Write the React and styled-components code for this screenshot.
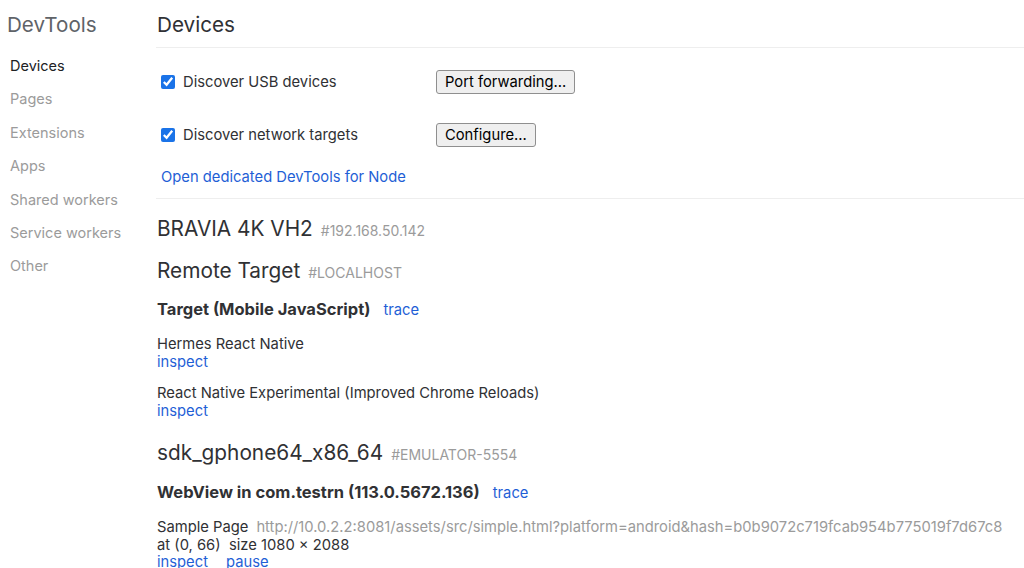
import React from "react";
import styled, { createGlobalStyle } from "styled-components";

const Global = createGlobalStyle`
  html, body { margin: 0; padding: 0; background: #fff; }
  body { font-family: Inter, "Noto Sans", "Liberation Sans", sans-serif; color: #202124; overflow: hidden; }
  * { box-sizing: border-box; }
`;

const Page = styled.div`
  display: flex;
  width: 1024px;
  height: 568px;
  overflow: hidden;
`;

const Sidebar = styled.nav`
  width: 156px;
  flex: none;
  padding: 12px 0 0 7px;
`;

const Brand = styled.div`
  font-size: 20.6px;
  color: #5f6368;
  line-height: 26px;
  margin-bottom: 19px;
`;

const NavItem = styled.div`
  font-size: 14.5px;
  line-height: 17px;
  height: 33.4px;
  padding-left: 3px;
  color: ${(p) => (p.$active ? "#202124" : "#9b9b9b")};
`;

const Main = styled.main`
  flex: 1;
  min-width: 0;
`;

const Header = styled.div`
  height: 48px;
  border-bottom: 1px solid #eeeeee;
  padding: 12px 0 0 1px;
  font-size: 20.7px;
  line-height: 26px;
  color: #303134;
`;

const Settings = styled.div`
  padding: 22px 0 0 5px;
  height: 151px;
  border-bottom: 1px solid #eeeeee;
`;

const OptionRow = styled.div`
  display: flex;
  align-items: center;
  height: 24px;
  margin-bottom: 29px;
`;

const Check = styled.input.attrs({ type: "checkbox", defaultChecked: true })`
  width: 14px;
  height: 14px;
  margin: 0 8px 0 0;
  accent-color: #1a73e8;
  flex: none;
`;

const OptionLabel = styled.label`
  width: 253px;
  font-size: 14.75px;
  color: #303134;
`;

const Button = styled.button`
  height: 24px;
  padding: 0 8px;
  font-family: inherit;
  font-size: 14.75px;
  color: #000;
  background: #efefef;
  border: 1px solid #8f8f8f;
  border-radius: 3px;
`;

const Link = styled.span`
  color: #1f5fd6;
  font-size: 14.75px;
  margin-right: ${(p) => p.$gap || 0}px;
`;

const NodeLink = styled(Link)`
  display: block;
  line-height: 17px;
  margin-top: -7px;
`;

const Devices = styled.div`
  padding: 18px 0 0 1px;
`;

const DeviceTitle = styled.div`
  display: flex;
  align-items: baseline;
  gap: 8px;
  font-size: 20.8px;
  line-height: 24px;
  color: #303134;
  margin-bottom: ${(p) => p.$mb}px;
`;

const Serial = styled.span`
  font-size: 14px;
  color: #9b9b9b;
`;

const BrowserTitle = styled.div`
  display: flex;
  align-items: baseline;
  gap: 13px;
  font-size: 16.5px;
  font-weight: 700;
  line-height: 18px;
  color: #303134;
  margin-bottom: 17px;
`;

const TraceLink = styled(Link)`
  font-weight: 400;
`;

const Target = styled.div`
  font-size: 14.75px;
  line-height: 17.5px;
  color: #303134;
  margin-bottom: ${(p) => p.$mb || 14}px;
  white-space: nowrap;
`;

const Url = styled.span`
  color: #9b9b9b;
  margin-left: 8px;
`;

const Line = styled.div``;

const navItems = ["Devices", "Pages", "Extensions", "Apps", "Shared workers", "Service workers", "Other"];

export default function App() {
  return (
    <>
      <Global />
      <Page>
        <Sidebar>
          <Brand>DevTools</Brand>
          {navItems.map((n, i) => (
            <NavItem key={n} $active={i === 0}>{n}</NavItem>
          ))}
        </Sidebar>
        <Main>
          <Header>Devices</Header>
          <Settings>
            <OptionRow>
              <Check />
              <OptionLabel>Discover USB devices</OptionLabel>
              <Button>Port forwarding...</Button>
            </OptionRow>
            <OptionRow>
              <Check />
              <OptionLabel>Discover network targets</OptionLabel>
              <Button>Configure...</Button>
            </OptionRow>
            <NodeLink>Open dedicated DevTools for Node</NodeLink>
          </Settings>
          <Devices>
            <DeviceTitle $mb={16}>BRAVIA 4K VH2 <Serial>#192.168.50.142</Serial></DeviceTitle>
            <DeviceTitle $mb={15}>Remote Target <Serial>#LOCALHOST</Serial></DeviceTitle>
            <BrowserTitle>Target (Mobile JavaScript) <TraceLink>trace</TraceLink></BrowserTitle>
            <Target>
              <Line>Hermes React Native</Line>
              <Line><Link>inspect</Link></Line>
            </Target>
            <Target $mb={21}>
              <Line>React Native Experimental (Improved Chrome Reloads)</Line>
              <Line><Link>inspect</Link></Line>
            </Target>
            <DeviceTitle $mb={16}>sdk_gphone64_x86_64 <Serial>#EMULATOR-5554</Serial></DeviceTitle>
            <BrowserTitle>WebView in com.testrn (113.0.5672.136) <TraceLink>trace</TraceLink></BrowserTitle>
            <Target>
              <Line>Sample Page<Url>http://10.0.2.2:8081/assets/src/simple.html?platform=android&amp;hash=b0b9072c719fcab954b775019f7d67c8</Url></Line>
              <Line>at (0, 66)&nbsp; size 1080 × 2088</Line>
              <Line><Link $gap={18}>inspect</Link><Link>pause</Link></Line>
            </Target>
          </Devices>
        </Main>
      </Page>
    </>
  );
}
